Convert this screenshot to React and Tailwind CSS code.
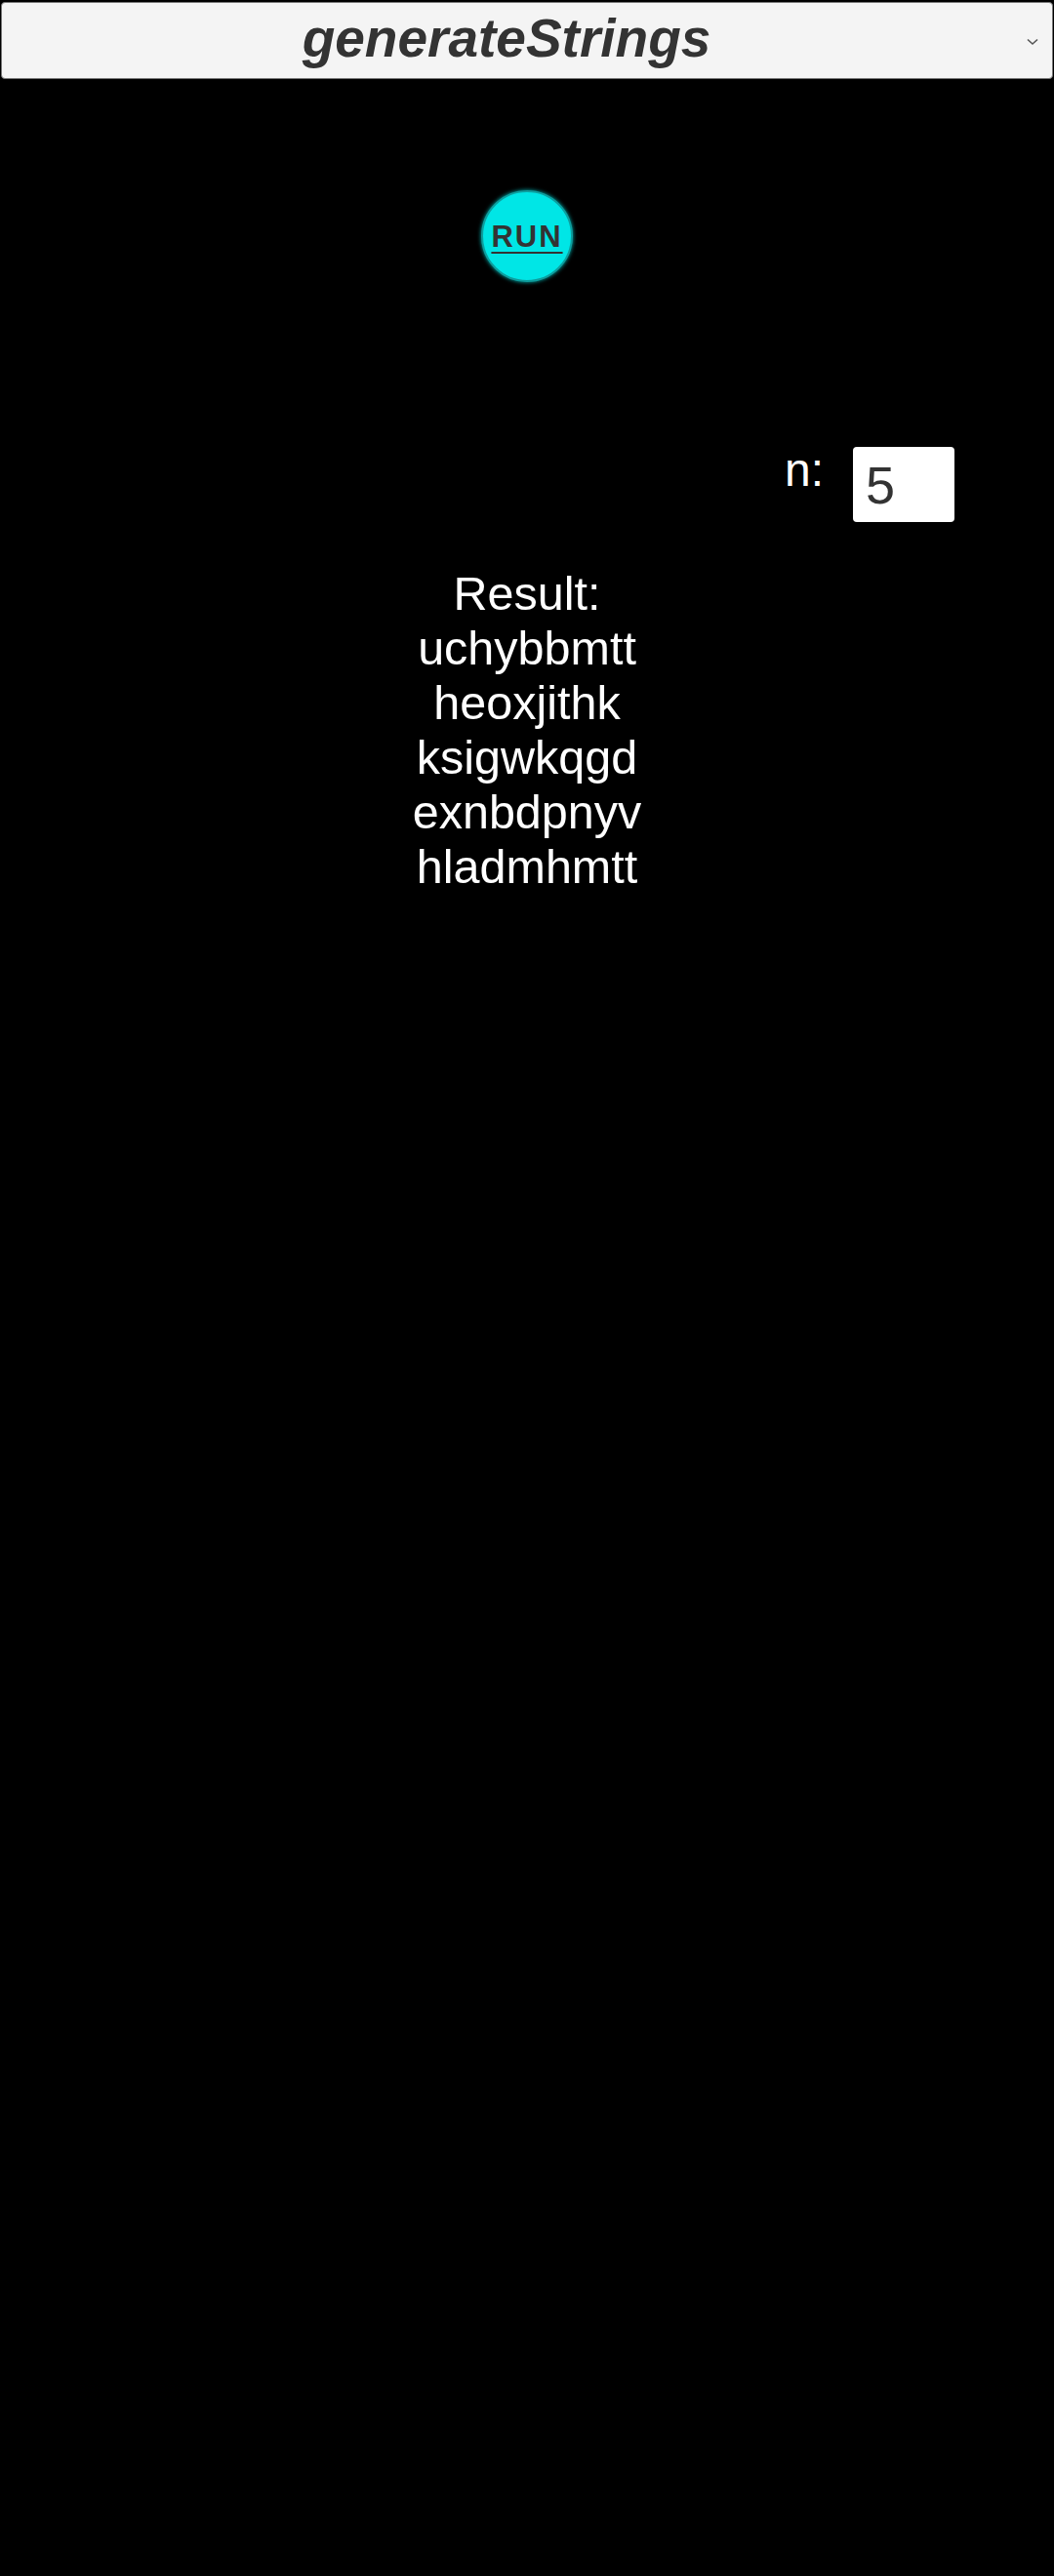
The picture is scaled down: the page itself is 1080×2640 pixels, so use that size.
export default function App() {
  const results = ["uchybbmtt", "heoxjithk", "ksigwkqgd", "exnbdpnyv", "hladmhmtt"];

  return (
    <div className="min-h-[2640px] w-full bg-black font-['Liberation_Sans',Arial,sans-serif]">
      <div className="pt-[2px] px-[1px]">
        <div className="relative flex h-[79px] items-center justify-center rounded-[4px] border border-[#767676] bg-[#f4f4f4] pb-[5px] pr-[42px]">
          <span className="text-[55px] font-bold italic leading-none text-[#333333]">generateStrings</span>
          <svg
            className="absolute right-[14px] top-[36px]"
            width="12"
            height="8"
            viewBox="0 0 12 8"
            fill="none"
          >
            <path d="M1 1.5 L6 6 L11 1.5" stroke="#555555" strokeWidth="1.6" />
          </svg>
        </div>
      </div>

      <div className="mt-[114px] flex justify-center">
        <button className="flex h-[94px] w-[94px] items-center justify-center rounded-full border-2 border-[#0d9e9e] bg-[#00e6e6] shadow-[0_0_4px_#0bb]">
          <span className="text-[31px] font-bold leading-none tracking-[2px] text-[#333333] underline decoration-2 underline-offset-[5px]">
            RUN
          </span>
        </button>
      </div>

      <div className="mt-[169px] flex items-start justify-end pr-[102px]">
        <span className="mt-[-4px] text-[48px] leading-[56px] text-white">n:</span>
        <div className="ml-[30px] flex h-[77px] w-[104px] items-center rounded-[4px] bg-white pl-[13px]">
          <span className="text-[54px] leading-none text-[#333333]">5</span>
        </div>
      </div>

      <div className="mt-[45px] flex flex-col items-center text-[48.5px] leading-[56px] text-white">
        <div>Result:</div>
        {results.map((r) => (
          <div key={r}>{r}</div>
        ))}
      </div>
    </div>
  );
}
